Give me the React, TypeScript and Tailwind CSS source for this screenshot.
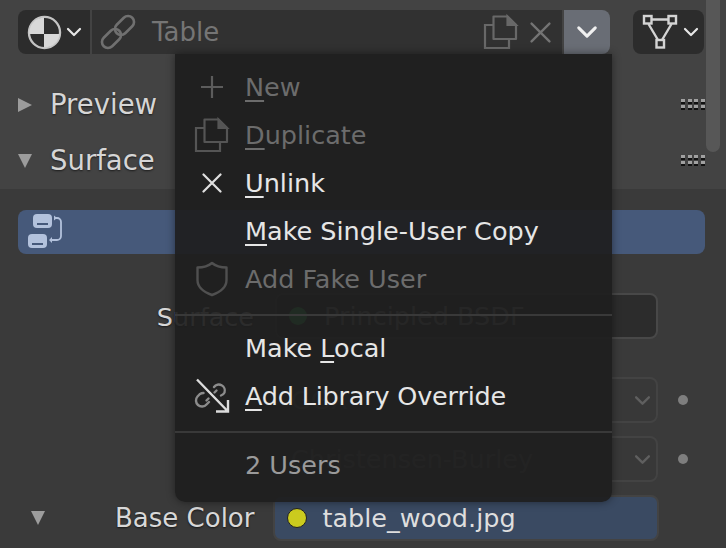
import type { ReactNode } from "react";

const font = "font-['DejaVu_Sans',sans-serif]";

function Chevron({ className }: { className: string }) {
  return (
    <svg viewBox="0 0 16 10" className={className} fill="none" stroke="currentColor" strokeWidth="2.2" strokeLinecap="round" strokeLinejoin="round">
      <path d="M2 2l6 6 6-6" />
    </svg>
  );
}

function ShadingIcon() {
  return (
    <svg width="35" height="35" viewBox="0 0 36 36">
      <circle cx="18" cy="18" r="16" fill="#2e2e2e" stroke="#c4c4c4" strokeWidth="2.4" />
      <path d="M17.500 2.500A15.500 15.500 0 0 0 2.500 19.500H17.500z" fill="#d8d8d8" />
      <path d="M17.500 19.500H33.500A15.500 15.500 0 0 1 17.500 33.500z" fill="#d8d8d8" />
    </svg>
  );
}

function LinkIcon() {
  return (
    <svg width="36" height="36" viewBox="0 0 36 36" fill="none" stroke="#707070" strokeWidth="2.600" strokeLinecap="round">
      <rect x="13.500" y="5.500" width="22" height="12" rx="6" transform="rotate(-45 24.500 11.500)" />
      <rect x="0.500" y="18.500" width="22" height="12" rx="6" transform="rotate(-45 11.500 24.500)" />
    </svg>
  );
}

function DuplicateIcon({ color }: { color: string }) {
  return (
    <svg width="36" height="36" viewBox="0 0 36 36" fill="none" stroke={color} strokeWidth="2.200">
      <path d="M10.500 2.500h14l8.500 8.500v14H10.500z" strokeLinejoin="round" />
      <path d="M24.500 2.500l8.500 8.500h-8.500z" fill={color} />
      <path d="M10 11H2v23h24v-8" />
    </svg>
  );
}

function CloseIcon({ color, size }: { color: string; size: number }) {
  return (
    <svg width={size} height={size} viewBox="0 0 20 20" fill="none" stroke={color} strokeWidth="2.200" strokeLinecap="round">
      <path d="M1.500 1.500l17 17M18.500 1.500l-17 17" />
    </svg>
  );
}

function MeshIcon() {
  return (
    <svg width="36" height="36" viewBox="0 0 36 36" fill="none" stroke="#d4d4d4" strokeWidth="2.400">
      <rect x="2" y="2" width="7.500" height="7.500" />
      <rect x="26.500" y="2" width="7.500" height="7.500" />
      <rect x="14.500" y="26" width="7.500" height="7.500" />
      <path d="M9.500 5.500h17M6.500 10l9.500 16M29.500 10l-9.500 16" />
    </svg>
  );
}

function NodesIcon() {
  return (
    <svg width="36" height="36" viewBox="0 0 36 36" fill="none">
      <rect x="5" y="0" width="19" height="14" rx="4" fill="#b3c2dc" />
      <rect x="9" y="9" width="11" height="2" fill="#46597a" />
      <rect x="0" y="20" width="19" height="14" rx="4" fill="#b3c2dc" />
      <rect x="4" y="29" width="11" height="2" fill="#46597a" />
      <path d="M27 4h2a4 4 0 0 1 4 4v14a4 4 0 0 1-4 4h-7" stroke="#b3c2dc" strokeWidth="1.800" />
      <path d="M26 1.500L29 4l-3 2.500zM24 23v6l-3-3z" fill="#b3c2dc" />
    </svg>
  );
}

function ShieldIcon() {
  return (
    <svg width="34" height="36" viewBox="0 0 34 36" fill="none" stroke="#505050" strokeWidth="2.400" strokeLinejoin="round">
      <path d="M17 2c3.500 3 8.500 4.500 14.500 4.500V19c0 7-6 12-14.500 15C8.500 31 2.500 26 2.500 19V6.500C8.500 6.500 13.500 5 17 2z" />
    </svg>
  );
}

function OverrideIcon() {
  return (
    <svg width="36" height="36" viewBox="0 0 36 36" fill="none" strokeWidth="2.400">
      <path d="M20 9a6 6 0 0 1 10.500 5.500q-1 2-3.500 3M20.500 14.500l2-2M15 24l-2.500 2.500a6 6 0 0 1-9-8l2.500-2.500q1.500-1 3.500-1" stroke="#8c8c8c" strokeLinecap="round" />
      <path d="M12.500 22.500l2-2" stroke="#8c8c8c" strokeLinecap="round" />
      <path d="M3 1.500l31 32M34 22v11.500H22" stroke="#dcdcdc" />
    </svg>
  );
}

function GripDots() {
  return (
    <div className="-mt-[4px] grid grid-cols-4 gap-x-[2.67px] gap-y-[3px]">
      {Array.from({ length: 8 }).map((_, i) => (
        <span key={i} className="h-[3px] w-[4px] bg-[#a0a0a0] shadow-[0_2px_0_#111]" />
      ))}
    </div>
  );
}

function PanelHeader({ open, label }: { open: boolean; label: string }) {
  return (
    <div className="flex h-[56px] items-center pl-[18px] pr-[21px]">
      <span className={open ? "h-0 w-0 border-x-[7px] border-t-[14px] border-x-transparent border-t-[#9c9c9c]" : "h-0 w-0 border-y-[7px] border-l-[14px] border-y-transparent border-l-[#9c9c9c]"} />
      <span className="ml-[18px] text-[27.5px] text-[#d6d6d6] [text-shadow:0_1px_2px_rgba(0,0,0,0.6)]">{label}</span>
      <div className="ml-auto"><GripDots /></div>
    </div>
  );
}

function SelectRow({ label }: { label: string }) {
  return (
    <div className="flex h-[46px] items-center">
      <div className="ml-[275px] flex h-full w-[383px] items-center rounded-[8px] border-2 border-[#434343] bg-[#383838] pl-[14px] pr-[5px] text-[25.5px] text-[#6a6a6a]">
        <span>{label}</span>
        <Chevron className="ml-auto h-[11px] w-[17px] text-[#5f5f5f]" />
      </div>
      <span className="ml-[20px] h-[10px] w-[10px] rounded-full bg-[#7e7e7e]" />
    </div>
  );
}

function MenuRow({ icon, children, disabled }: { icon?: ReactNode; children: ReactNode; disabled?: boolean }) {
  return (
    <div className={`flex h-[48px] items-center text-[25.5px] ${disabled ? "text-[#6c6c6c]" : "text-[#e6e6e6]"}`}>
      <span className="flex w-[70px] shrink-0 items-center justify-center pl-[3px]">{icon}</span>
      <span className="whitespace-pre">{children}</span>
    </div>
  );
}

function Key({ children }: { children: string }) {
  return <span className="underline decoration-2 underline-offset-[4px] [text-decoration-skip-ink:none]">{children}</span>;
}

export default function App() {
  return (
    <div className={`relative h-[548px] w-[726px] overflow-hidden bg-[#3a3a3a] ${font}`}>
      <div className="h-[189px] bg-[#434343] pt-[10px]">
        <div className="flex h-[44px] pl-[18px] pr-[22px]">
          <div className="flex w-[72px] items-center rounded-l-[8px] bg-[#2c2c2c] pl-[9px]">
            <ShadingIcon />
            <Chevron className="ml-[4px] h-[10px] w-[16px] text-[#e6e6e6]" />
          </div>
          <div className="ml-[2px] flex w-[470px] items-center bg-[#313131] pl-[8px] pr-[11px]">
            <LinkIcon />
            <span className="ml-[16px] text-[26px] text-[#757575]">Table</span>
            <div className="ml-auto flex items-center gap-[11px]">
              <DuplicateIcon color="#686868" />
              <CloseIcon color="#747474" size={21} />
            </div>
          </div>
          <div className="ml-[2px] flex w-[46px] items-center justify-center rounded-r-[8px] bg-[#696d75]">
            <Chevron className="h-[14px] w-[22px] text-[#f0f0f0]" />
          </div>
          <div className="ml-auto flex w-[71px] items-center rounded-[8px] bg-[#2c2c2c] pl-[9px]">
            <MeshIcon />
            <Chevron className="ml-[5px] h-[10px] w-[16px] text-[#e6e6e6]" />
          </div>
        </div>
        <div className="pt-[23px]">
          <PanelHeader open={false} label="Preview" />
          <PanelHeader open label="Surface" />
        </div>
      </div>

      <div className="pl-[18px] pr-[21px] pt-[21px]">
        <div className="flex h-[44px] items-center rounded-[8px] bg-[#46597a] pl-[10px]">
          <NodesIcon />
        </div>
      </div>

      <div className="pt-[39px] pr-[21px] text-[#d8d8d8]">
        <div className="relative flex h-[46px] items-center">
          <span className="absolute right-[451px] top-[5px] text-[25.5px] [text-shadow:0_1px_2px_rgba(0,0,0,0.6)]">Surface</span>
          <div className="ml-[275px] flex h-full w-[383px] items-center rounded-[8px] border-2 border-[#484848] bg-[#2c2c2c] pl-[12px] text-[25.5px] text-[#909090]">
            <span className="h-[18px] w-[18px] rounded-full bg-[#40d060]" />
            <span className="ml-[17px]">Principled BSDF</span>
          </div>
        </div>
        <div className="mt-[38px]">
          <SelectRow label="GGX" />
        </div>
        <div className="mt-[13px]">
          <SelectRow label="Christensen-Burley" />
        </div>
        <div className="mt-[13px] flex h-[46px] items-center">
          <span className="ml-[31px] h-0 w-0 border-x-[7px] border-t-[14px] border-x-transparent border-t-[#9c9c9c]" />
          <span className="ml-[70px] text-[26px] text-[#d8d8d8] [text-shadow:0_1px_2px_rgba(0,0,0,0.6)]">Base Color</span>
          <div className="ml-[19px] flex h-full w-[386px] items-center rounded-[8px] border-2 border-[#434343] bg-[#3a4a62] pl-[12px] text-[25.5px] text-[#dedede]">
            <span className="h-[20px] w-[20px] rounded-full border border-[#222] bg-[#cbcb1e]" />
            <span className="ml-[15px]">table_wood.jpg</span>
          </div>
        </div>
      </div>

      {/* scrollbar */}
      <div className="absolute right-[6px] top-0 h-[152px] w-[14px] rounded-b-[7px] bg-[#575757]" />

      {/* dropdown menu, slightly see-through like blender's popups */}
      <div className="absolute left-[175px] top-[54px] h-[448px] w-[437px] rounded-b-[10px] bg-[#1e1e1e]/[0.93] pt-[9px] shadow-[0_0_8px_rgba(0,0,0,0.45)]">
        <MenuRow
          disabled
          icon={
            <svg width="22" height="22" viewBox="0 0 22 22" stroke="#5c5c5c" strokeWidth="2.200">
              <path d="M11 0v22M0 11h22" />
            </svg>
          }
        >
          <Key>N</Key>ew
        </MenuRow>
        <MenuRow disabled icon={<DuplicateIcon color="#555555" />}>
          <Key>D</Key>uplicate
        </MenuRow>
        <MenuRow icon={<CloseIcon color="#e0e0e0" size={20} />}>
          <Key>U</Key>nlink
        </MenuRow>
        <MenuRow>
          <Key>M</Key>ake Single-User Copy
        </MenuRow>
        <MenuRow disabled icon={<ShieldIcon />}>
          Add Fake User
        </MenuRow>
        <div className="h-[21px] pt-[11px]">
          <div className="h-[2px] w-full bg-[#393939]" />
        </div>
        <MenuRow>
          Make <Key>L</Key>ocal
        </MenuRow>
        <MenuRow icon={<OverrideIcon />}>
          <span className="tracking-[-0.2px]">
            <Key>A</Key>dd Library Override
          </span>
        </MenuRow>
        <div className="flex h-[24px] items-center">
          <div className="h-[2px] w-full bg-[#393939]" />
        </div>
        <div className="flex h-[42px] items-center pl-[70px] text-[25.5px] text-[#9a9a9a]">2 Users</div>
      </div>
    </div>
  );
}
